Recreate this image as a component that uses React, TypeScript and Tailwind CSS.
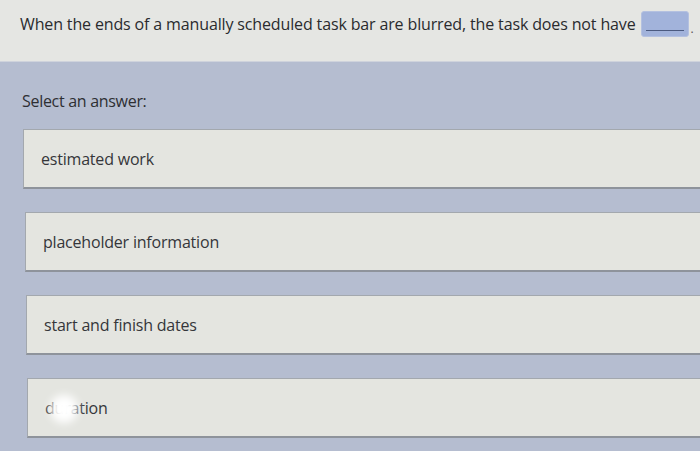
const answers = [
  { label: 'estimated work', ml: 'ml-[23px]' },
  { label: 'placeholder information', ml: 'ml-[25px]' },
  { label: 'start and finish dates', ml: 'ml-[26px]' },
  { label: 'duration', ml: 'ml-[27px]' },
];

export default function App() {
  return (
    <div
      className="relative w-[700px] h-[451px] overflow-hidden bg-[#b5bdd0] text-[#2e2f33]"
      style={{ fontFamily: '"Open Sans", "Noto Sans", sans-serif' }}
    >
      {/* Question */}
      <div className="h-[62px] bg-[#e5e6e3] flex items-start pt-[11px] pl-[20px] border-b border-[#cfd3dc]">
        <span className="mt-[1px] text-[16px] leading-[24px] tracking-[-0.14px] text-[#2a2b2e]">
          When the ends of a manually scheduled task bar are blurred, the task does not have
        </span>
        <span className="ml-[5px] w-[48px] h-[26px] rounded-[3px] bg-[#a2b3db] border border-[#b4c1e0] flex items-end justify-center pb-[5px]">
          <span className="block w-[38px] h-[1px] bg-[#4b5a80]" />
        </span>
        <span className="ml-[2px] mt-[9px] text-[12px] text-[#555]">.</span>
      </div>

      {/* Answers */}
      <div className="pt-[27px]">
        <p className="pl-[22px] text-[16px] tracking-[-0.3px] text-[#2e2f33]">Select an answer:</p>
        <div className="mt-[16px] flex flex-col gap-[23px]">
          {answers.map((a) => (
            <div
              key={a.label}
              className={`${a.ml} h-[60px] bg-[#e4e5e0] border border-[#a3a8ae] border-r-0 border-b-2 border-b-[#8e939b] flex items-center pl-[17px]`}
            >
              <span className="text-[16px] tracking-[-0.2px] text-[#35363a]">{a.label}</span>
            </div>
          ))}
        </div>
      </div>

      {/* glare spot from the photo */}
      <div className="absolute left-[50px] top-[395px] w-[28px] h-[28px] rounded-full bg-white blur-[4px]" />
    </div>
  );
}
